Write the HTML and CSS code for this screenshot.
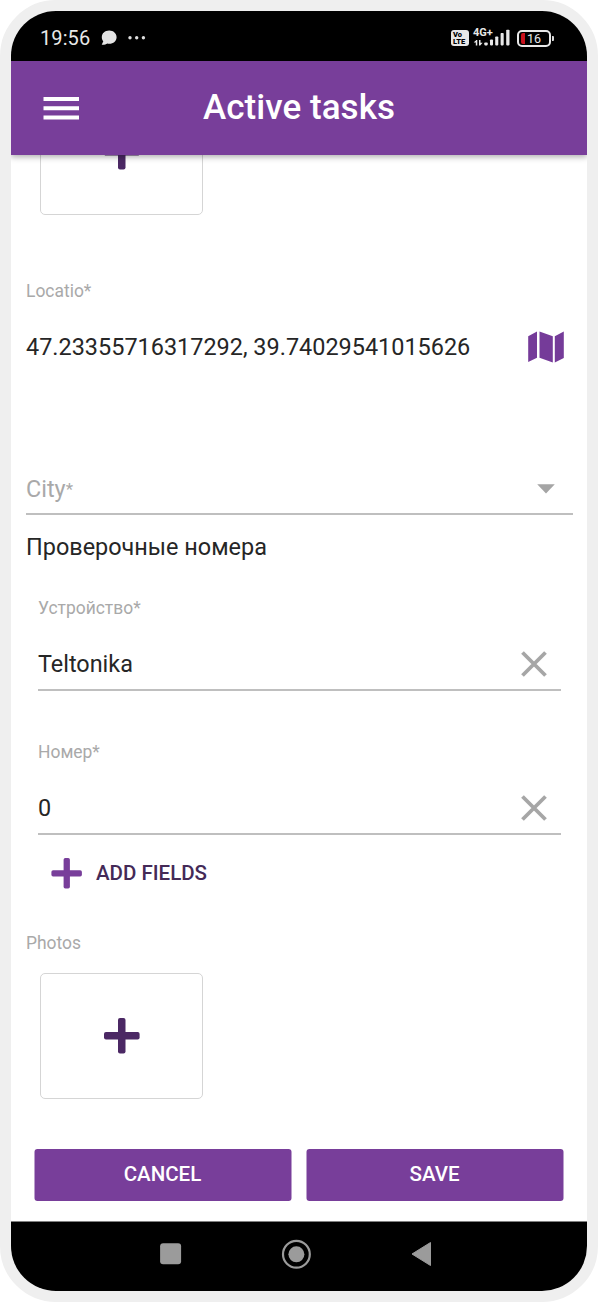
FILE: index.html
```html
<!DOCTYPE html>
<html lang="en">
<head>
<meta charset="utf-8">
<title>Active tasks</title>
<link rel="stylesheet" href="styles.css">
</head>
<body>
<div class="phone">
  <div class="status">
    <span class="time">19:56</span>
    <svg class="chat" width="16" height="16" viewBox="0 0 16 16"><path d="M8.200.6C4 .6.8 3.400.8 7.200c0 1.700.6 3 1.500 4.100L.7 14.800c2.300.2 4.300-.3 5.600-1.200.6.1 1.200.2 1.900.2 4.200 0 7.400-2.900 7.400-6.600S12.400.6 8.200.6z" fill="#e4e4e4"/></svg>
    <svg class="dots" width="18" height="4" viewBox="0 0 18 4" fill="#dedede"><circle cx="2" cy="1.700" r="1.700"/><circle cx="8.700" cy="1.700" r="1.700"/><circle cx="15.400" cy="1.700" r="1.700"/></svg>
    <div class="volte"><span>Vo</span><span>LTE</span></div>
    <div class="signal">
      <span class="net">4G+</span>
      <svg class="bars" width="38" height="18" viewBox="0 0 38 18" fill="#e8e8e8"><path d="M2.800 11h1.500v5.400H2.800zM.7 13.600l2.400-2.600v2.600zM6 11h1.500v5.400H6zM7.200 16.400v-2.600h2.400z"/><rect x="11.300" y="13.500" width="3.400" height="2.900" rx=".8"/><rect x="17" y="10.500" width="3" height="5.900" rx=".8"/><rect x="22.200" y="7.500" width="3.100" height="8.900" rx=".8"/><rect x="27.600" y="4" width="3.100" height="12.400" rx=".8"/><rect x="33.200" y=".8" width="3.300" height="15.600" rx=".8"/></svg>
    </div>
    <div class="battery"><i class="charge"></i><span>16</span></div><i class="tip"></i>
  </div>
  <header class="bar">
    <svg width="36" height="24" viewBox="0 0 36 24" fill="#fff"><path d="M.5 1H36v4H.5zM.5 10.200H36v4H.5zM.5 19.400H36v4H.5z"/></svg>
    <h1>Active tasks</h1>
  </header>
  <main class="form">
    <div class="photo photo-cut"><svg width="36" height="36" viewBox="0 0 36 36"><rect x="14" y="0" width="7.500" height="35.600" rx="2"/><rect x="0" y="14" width="35.600" height="7.500" rx="2"/></svg></div>
    <div class="label loc-label">Locatio*</div>
    <div class="coords"><span>47.23355716317292, 39.74029541015626</span>
      <svg width="37" height="32" viewBox="0 0 37 32" fill="#753b99"><path d="M.2 5.300 9 .6v26.200L.2 31zM11.500.6l13.300 4.600V31.400l-13.300-4.600zM26.800 5.300 35.800.6v26.300l-9 4.500z"/></svg>
    </div>
    <div class="field city"><span>City<small>*</small></span><svg width="18" height="10" viewBox="0 0 18 10"><path d="M.2.200h17.600L9 9.500z" fill="#a5a5a5"/></svg></div>
    <h2>Проверочные номера</h2>
    <section class="group">
      <div class="label device-label">Устройство*</div>
      <div class="field"><span>Teltonika</span><svg class="clear" width="28" height="28" viewBox="0 0 28 28"><path d="m2.500 2.500 23 23m0-23-23 23"/></svg></div>
      <div class="label number-label">Номер*</div>
      <div class="field"><span>0</span><svg class="clear" width="28" height="28" viewBox="0 0 28 28"><path d="m2.500 2.500 23 23m0-23-23 23"/></svg></div>
      <div class="add"><svg width="31" height="31" viewBox="0 0 31 31"><rect x="12.600" y="0" width="6.300" height="30.500" rx="1.700"/><rect x=".4" y="12.200" width="30.500" height="6.300" rx="1.700"/></svg><span>ADD FIELDS</span></div>
    </section>
    <div class="label photos-label">Photos</div>
    <div class="photo"><svg width="36" height="36" viewBox="0 0 36 36"><rect x="14" y="0" width="7.500" height="35.600" rx="2"/><rect x="0" y="14" width="35.600" height="7.500" rx="2"/></svg></div>
    <div class="actions"><button>CANCEL</button><button>SAVE</button></div>
  </main>
  <nav class="nav">
    <svg width="22" height="22" viewBox="0 0 22 22"><rect x=".1" y=".3" width="21" height="21" rx="3" fill="#9b9b9b"/></svg>
    <svg class="home" width="30" height="30" viewBox="0 0 30 30"><circle cx="15.400" cy="15.300" r="13.400" fill="none" stroke="#9b9b9b" stroke-width="2.200"/><circle cx="15.400" cy="15.300" r="8" fill="#9b9b9b"/></svg>
    <svg class="back" width="20" height="26" viewBox="0 0 20 26"><path d="M19.500 1.500v23L1 13z" fill="#9b9b9b" stroke="#9b9b9b" stroke-linejoin="round"/></svg>
  </nav>
</div>
</body>
</html>
```
FILE: styles.css
```css
* { box-sizing: border-box; }
body { margin: 0; background: #fff; font-family: Roboto, "Liberation Sans", sans-serif; color: #262626; }
svg { display: block; flex: none; }
.phone { width: 598px; height: 1302px; border: 11px solid #efefef; border-radius: 56px; background: #fff; overflow: hidden; display: flex; flex-direction: column; }
.status { height: 50px; flex: none; background: #000; color: #e8e8e8; display: flex; align-items: center; padding: 4px 33px 0 29px; }
.time { font-size: 20px; line-height: 24px; width: 61px; letter-spacing: .1px; }
.chat { margin-right: 11px; }
.volte { width: 18px; height: 16px; margin-left: auto; background: #e8e8e8; border-radius: 3px; color: #000; font-size: 7.500px; line-height: 7px; font-weight: 900; display: flex; flex-direction: column; padding: 1px 1px 0 2px; }
.signal { position: relative; width: 38px; height: 18px; margin-left: 4px; }
.net { position: absolute; left: 0; top: -2px; font-size: 11px; line-height: 12px; font-weight: 700; }
.battery { position: relative; width: 34px; height: 17px; margin-left: 6px; border: 2px solid #e8e8e8; border-radius: 5px; font-size: 12.500px; line-height: 13px; text-align: center; }
.charge { position: absolute; left: 2px; top: 1px; width: 4px; height: 11px; border-radius: 2px 0 0 2px; background: #c8101c; }
.tip { width: 2px; height: 5px; margin-left: 1px; background: #d8d8d8; border-radius: 0 1px 1px 0; }
.bar { height: 94px; flex: none; background: #783e9a; color: #fff; display: flex; align-items: center; padding-left: 32px; position: relative; z-index: 1; box-shadow: 0 2px 6px rgba(0,0,0,.32); }
.bar h1 { margin: 0 0 0 124px; font-size: 35px; line-height: 42px; letter-spacing: .05px; font-weight: 500; white-space: nowrap; }
.form { flex: 1; min-height: 0; overflow: hidden; padding: 0 14px 0 15px; display: flex; flex-direction: column; }
.form > * { flex: none; }
.photo { width: 163px; height: 126px; margin: 15px 0 0 14px; border: 1px solid #d5d5d5; border-radius: 5px; display: flex; align-items: center; justify-content: center; }
.photo-cut { margin-top: -66px; }
.photo svg { fill: #4b2864; }
.label { height: 30px; line-height: 30px; font-size: 17.450px; color: #a9a9a9; }
.loc-label { margin-top: 61px; }
.coords { height: 40px; margin-top: 21px; padding-right: 8px; display: flex; align-items: center; justify-content: space-between; font-size: 23.450px; }
.field { height: 51px; margin-top: 17px; padding-bottom: 1px; border-bottom: 2px solid #bfbfbf; display: flex; align-items: center; justify-content: space-between; font-size: 23.400px; }
.city { margin-top: 97px; padding: 0 18px 0 0; color: #a9a9a9; }
.city small { font-size: 17px; position: relative; top: -2px; }
h2 { margin: 17px 0 0; font-size: 23.450px; line-height: 30px; font-weight: 400; }
.group { padding: 0 12px; }
.device-label { margin-top: 31px; }
.number-label { margin-top: 46px; }
.clear { margin-right: 13px; }
.clear path { stroke: #a6a6a6; stroke-width: 3.800; }
.add { height: 40px; margin: 18px 0 0 13px; display: flex; align-items: center; gap: 14px; font-size: 20.500px; font-weight: 500; color: #442a57; }
.add svg { fill: #783e9a; }
.photos-label { margin-top: 35px; }
.actions { margin: 50px 9.500px 0 8.500px; display: flex; gap: 15px; transform: translateX(-.5px); }
.actions button { flex: 1; height: 52px; padding: 0 0 2px; border: 0; border-radius: 3px; background: #783e9a; color: #fff; font: 500 20.500px/50px Roboto, "Liberation Sans", sans-serif; }
.nav { height: 70px; flex: none; background: #000; border-top: 1px solid #808080; display: flex; align-items: flex-start; padding: 21px 0 0 149px; }
.home { margin: -4px 0 0 99px; }
.back { margin: -2px 0 0 100px; }
```
